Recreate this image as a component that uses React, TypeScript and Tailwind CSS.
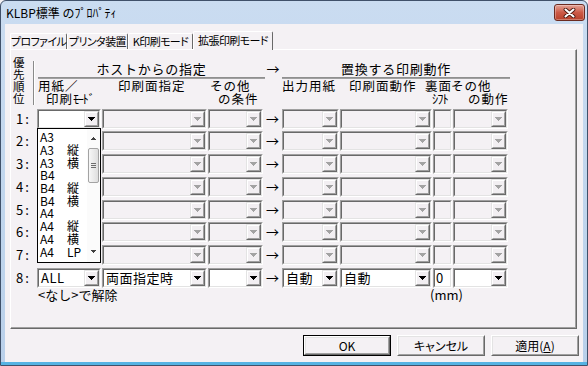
import React from "react";

const CLIENT = "bg-[#f4f1f4]";

function Tri({ on }: { on: boolean }) {
  return (
    <svg width="7" height="4" viewBox="0 0 7 4" shapeRendering="crispEdges">
      <path d="M0 0h7v1H0zM1 1h5v1H1zM2 2h3v1H2zM3 3h1v1H3z" fill={on ? "#000" : "#a3a3a3"} />
    </svg>
  );
}

function Sunken({ className, on, children }: { className: string; on: boolean; children?: React.ReactNode }) {
  return (
    <div className={`h-[20px] shrink-0 border border-t-[#a0a0a0] border-l-[#a0a0a0] border-r-white border-b-white ${className}`}>
      <div
        className={`h-full w-full flex items-center border border-t-[#696969] border-l-[#696969] border-r-[#e3e3e3] border-b-[#e3e3e3] ${
          on ? "bg-white" : "bg-[#f4f1f4]"
        }`}
      >
        {children}
      </div>
    </div>
  );
}

function Combo({ className, on = false, value = "" }: { className: string; on?: boolean; value?: string }) {
  return (
    <Sunken className={className} on={on}>
      <div className="flex-1 pl-[2px] text-[13px] leading-[16px] whitespace-nowrap tracking-[0.5px]">{value}</div>
      <div className="w-[15px] h-full shrink-0 border border-t-[#e3e3e3] border-l-[#e3e3e3] border-r-[#696969] border-b-[#696969]">
        <div className="w-full h-full border border-t-white border-l-white border-r-[#a0a0a0] border-b-[#a0a0a0] bg-[#f2eff2] flex items-center justify-center">
          <Tri on={on} />
        </div>
      </div>
    </Sunken>
  );
}

function TextBox({ on = false, value = "" }: { on?: boolean; value?: string }) {
  return (
    <Sunken className="w-[19px] ml-[1px]" on={on}>
      <div className="pl-[1px] text-[13px] leading-[16px]">{value}</div>
    </Sunken>
  );
}

function Scrollbar() {
  return (
    <div className="w-[13px] h-full relative bg-[#fbfbfb]">
      <div className="absolute top-[8px] left-[4px]">
        <svg width="5" height="3" viewBox="0 0 5 3" shapeRendering="crispEdges">
          <path d="M2 0h1v1H2zM1 1h3v1H1zM0 2h5v1H0z" fill="#404040" />
        </svg>
      </div>
      <div className="absolute top-[19px] left-[1px] w-[11px] h-[35px] rounded-[2px] border border-[#a3a3a3] bg-gradient-to-r from-[#f7f7f7] to-[#dedede] flex flex-col items-center justify-center gap-[1px]">
        <div className="w-[5px] h-[1px] bg-[#6d6d6d]" />
        <div className="w-[5px] h-[1px] bg-[#6d6d6d]" />
        <div className="w-[5px] h-[1px] bg-[#6d6d6d]" />
      </div>
      <div className="absolute bottom-[9px] left-[4px]">
        <svg width="5" height="3" viewBox="0 0 5 3" shapeRendering="crispEdges">
          <path d="M0 0h5v1H0zM1 1h3v1H1zM2 2h1v1H2z" fill="#404040" />
        </svg>
      </div>
    </div>
  );
}

function DropList() {
  const items: [string, string][] = [
    ["A3", ""],
    ["A3", "縦"],
    ["A3", "横"],
    ["B4", ""],
    ["B4", "縦"],
    ["B4", "横"],
    ["A4", ""],
    ["A4", "縦"],
    ["A4", "横"],
    ["A4", "LP"],
  ];
  return (
    <div className="absolute left-0 top-[19px] w-[64px] h-[135px] border border-black bg-white flex z-20">
      <div className="flex-1 flex flex-col pt-[2px]">
        {items.map(([a, b], i) => (
          <div key={i} className="h-[12.7px] flex items-center pl-[2px] text-[12px] leading-[12px] whitespace-nowrap">
            <span className="w-[27px] shrink-0">{a}</span>
            <span>{b}</span>
          </div>
        ))}
      </div>
      <Scrollbar />
    </div>
  );
}

function Arrow() {
  return <div className="w-[19px] shrink-0 text-center text-[13px] leading-[20px]">→</div>;
}

function Row({ n, cls, children }: { n: number; cls: string; children: React.ReactNode }) {
  return (
    <div className={`flex h-[20px] items-center ${cls}`}>
      <div className="w-[26px] shrink-0 pl-[5px] text-[13px] leading-[20px] tracking-[2px]">{n}:</div>
      {children}
    </div>
  );
}

function DisabledRest() {
  return (
    <>
      <Combo className="w-[105px] ml-[1px]" />
      <Combo className="w-[55px] ml-[1px]" />
      <Arrow />
      <Combo className="w-[57px]" />
      <Combo className="w-[92px] ml-[1px]" />
      <TextBox />
      <Combo className="w-[55px] ml-[1px]" />
    </>
  );
}

function Tab({ label, w, sel }: { label: string; w: string; sel?: boolean }) {
  return (
    <div
      className={`${w} ${
        sel ? "h-[19px] -mb-[1px] relative z-10 pt-[1px]" : "h-[16px]"
      } shrink-0 border-t border-l border-r border-t-white border-l-white border-r-[#696969] rounded-t-[2px] ${CLIENT} flex justify-center text-[11px] leading-[14px] tracking-[-0.6px] [font-feature-settings:'palt'] whitespace-nowrap`}
    >
      {label}
    </div>
  );
}

function Btn({ children, def }: { children: React.ReactNode; def?: boolean }) {
  return (
    <div className={`w-[88px] h-[21px] shrink-0 ${def ? "border border-black" : ""}`}>
      <div className="h-full w-full border border-t-white border-l-white border-r-[#696969] border-b-[#696969]">
        <div className="h-full w-full border border-t-[#e3e3e3] border-l-[#e3e3e3] border-r-[#a0a0a0] border-b-[#a0a0a0] flex items-center justify-center text-[12px] leading-[14px] [font-feature-settings:'palt']">
          {children}
        </div>
      </div>
    </div>
  );
}

function CloseBtn() {
  return (
    <div className="w-[31px] h-[17px] rounded-[3px] border border-[#6b2a20] bg-gradient-to-b from-[#e3a296] via-[#cc5a47] to-[#b8402a] flex items-center justify-center shadow-[inset_0_0_0_1px_rgba(255,255,255,0.3)]">
      <svg width="13" height="10" viewBox="0 0 13 10">
        <path d="M2.5 1.5L10.5 8.5M10.5 1.5L2.5 8.5" stroke="#4a1810" strokeWidth="3.8" strokeLinecap="round" />
        <path d="M2.5 1.5L10.5 8.5M10.5 1.5L2.5 8.5" stroke="#ffffff" strokeWidth="2.1" strokeLinecap="round" />
      </svg>
    </div>
  );
}

export default function App() {
  const gaps = ["", "mt-[2px]", "mt-[3px]", "mt-[3px]", "mt-[3px]", "mt-[2px]", "mt-[3px]"];
  return (
    <div className="w-[588px] h-[366px] overflow-hidden font-['Noto_Sans_CJK_JP',sans-serif] text-black bg-[#f4f1f4]">
      <div className="w-full h-full border border-[#40516a] rounded-t-[6px] flex flex-col bg-gradient-to-b from-[#cadcf1] to-[#b9d0ea]">
        <div className="h-[23px] shrink-0 flex items-center justify-between pl-[5px] pr-[2px]">
          <span className="text-[12px] leading-[14px]">KLBP標準 のﾌﾟﾛﾊﾟﾃｨ</span>
          <CloseBtn />
        </div>
        <div className={`flex-1 mx-[4px] ${CLIENT} flex flex-col`}>
          <div className="flex items-end pl-[5px] pt-[7px]">
            <Tab label="プロファイル" w="w-[57px]" />
            <Tab label="プリンタ装置" w="w-[61px]" />
            <Tab label="K印刷モード" w="w-[65px]" />
            <Tab label="拡張印刷モード" w="w-[80px]" sel />
          </div>
          <div className="ml-[5px] mr-[6px] h-[280px] shrink-0 border border-t-white border-l-white border-r-[#696969] border-b-[#696969]">
            <div className="w-full h-full border-r border-b border-r-[#a0a0a0] border-b-[#a0a0a0] flex flex-col">
              {/* header block */}
              <div className="flex h-[55px] shrink-0">
                <div className="w-[22px] shrink-0 pl-[2px] pt-[6px] flex flex-col text-[11.5px] leading-[12px]">
                  <div className="h-[12px]">優</div>
                  <div className="h-[12px]">先</div>
                  <div className="h-[12px]">順</div>
                  <div className="h-[12px]">位</div>
                </div>
                <div className="w-[2px] mt-[11px] h-[44px] flex shrink-0">
                  <div className="w-[1px] h-full bg-[#8a8a8a]" />
                  <div className="w-[1px] h-full bg-white" />
                </div>
                <div className="ml-[3px] flex flex-col pt-[11px]">
                  <div className="flex h-[15px] items-center text-[13px] leading-[15px] tracking-[0.75px] whitespace-nowrap">
                    <div className="w-[227px] text-center">ホストからの指定</div>
                    <div className="w-[17px] text-center">→</div>
                    <div className="w-[228px] text-center">置換する印刷動作</div>
                  </div>
                  <div className="flex mt-[1px] h-[2px]">
                    <div className="w-[227px] flex flex-col">
                      <div className="h-[1px] bg-[#8f8f8f]" />
                      <div className="h-[1px] bg-[#a0a0a0]" />
                    </div>
                    <div className="w-[17px]" />
                    <div className="w-[228px] flex flex-col">
                      <div className="h-[1px] bg-[#8f8f8f]" />
                      <div className="h-[1px] bg-[#a0a0a0]" />
                    </div>
                  </div>
                  <div className="flex h-[13px] text-[12.5px] leading-[13px] whitespace-nowrap tracking-[1px]">
                    <div className="w-[80px]">用紙／</div>
                    <div className="w-[92px]">印刷面指定</div>
                    <div className="w-[72px]">その他</div>
                    <div className="w-[67px]">出力用紙</div>
                    <div className="w-[76px]">印刷面動作</div>
                    <div className="w-[26px]">裏面</div>
                    <div>その他</div>
                  </div>
                  <div className="flex h-[13px] text-[12.5px] leading-[13px] whitespace-nowrap tracking-[1px] pl-[8px]">
                    <div className="w-[172px]">
                      印刷<span className="tracking-[-1.5px]">ﾓｰﾄﾞ</span>
                    </div>
                    <div className="w-[214px]">の条件</div>
                    <div className="w-[36px] tracking-[-1px]">ｼﾌﾄ</div>
                    <div>の動作</div>
                  </div>
                </div>
              </div>
              {/* rows */}
              <div className="flex flex-col mt-[4px]">
                {gaps.map((g, i) => (
                  <Row key={i} n={i + 1} cls={g}>
                    {i === 0 ? (
                      <div className="relative w-[64px] shrink-0">
                        <Combo className="w-[64px]" on />
                        <DropList />
                      </div>
                    ) : (
                      <div className="w-[64px] shrink-0" />
                    )}
                    <DisabledRest />
                  </Row>
                ))}
                <Row n={8} cls="mt-[3px]">
                  <Combo className="w-[64px]" on value="ALL" />
                  <Combo className="w-[105px] ml-[1px]" on value="両面指定時" />
                  <Combo className="w-[55px] ml-[1px]" on />
                  <Arrow />
                  <Combo className="w-[57px]" on value="自動" />
                  <Combo className="w-[92px] ml-[1px]" on value="自動" />
                  <TextBox on value="0" />
                  <Combo className="w-[55px] ml-[1px]" on />
                </Row>
                <div className="flex text-[13px] leading-[14px] whitespace-nowrap">
                  <div className="w-[27px] shrink-0" />
                  <div className="w-[392px] shrink-0">&lt;なし&gt;で解除</div>
                  <div>(mm)</div>
                </div>
              </div>
            </div>
          </div>
          <div className="flex justify-end gap-[6px] pr-[4px] mt-[6px]">
            <Btn def>OK</Btn>
            <Btn>キャンセル</Btn>
            <Btn>
              適用(<span className="underline">A</span>)
            </Btn>
          </div>
        </div>
        <div className="h-[3px] shrink-0 bg-[#55b3e3]" />
      </div>
    </div>
  );
}
